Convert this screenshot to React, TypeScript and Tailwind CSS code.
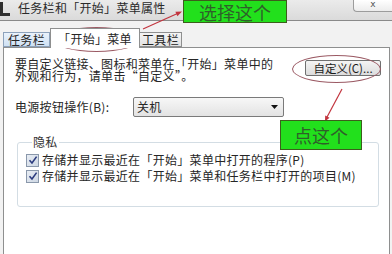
import React from 'react';

const CheckBox = () => (
  <span className="w-[13px] h-[13px] shrink-0 border border-[#8a98ab] bg-gradient-to-br from-[#e8edf4] to-[#cfd8e4] flex items-center justify-center">
    <svg width="10" height="10" viewBox="0 0 10 10">
      <path d="M1.5 5.2 L4 8 L8.6 1.6" fill="none" stroke="#2b3b7e" strokeWidth="1.6" />
    </svg>
  </span>
);

export default function App() {
  return (
    <div className="relative w-[392px] h-[254px] overflow-hidden bg-[#f2f2f2] text-[#262626] text-[12px] tracking-[0.3px] font-['Noto_Sans_CJK_SC','Liberation_Sans',sans-serif]">
      {/* title bar */}
      <div className="h-[21px] flex items-start bg-gradient-to-b from-[#ebebeb] to-[#dadada] border-b border-[#8a8a8a]">
        <svg width="10" height="16" viewBox="0 0 10 16" className="mt-[1px] shrink-0">
          <path d="M0 1 H3 V12 H10 V15 H0 Z" fill="#2e2e2e" />
        </svg>
        <span className="ml-[8px] mt-[1px] text-[12px] leading-[14px] text-[#2a2a2a]">任务栏和「开始」菜单属性</span>
        <div className="ml-auto w-[39px] h-[12px] bg-gradient-to-b from-white to-[#ececec] border border-t-0 border-r-0 border-[#9c9c9c] rounded-bl-[4px] flex justify-center">
          <span className="text-[9px] leading-[8px] text-[#555] font-['DejaVu_Sans',sans-serif]">x</span>
        </div>
      </div>

      {/* tabs */}
      <div className="h-[26px] flex items-end pl-[3px]">
        <div className="h-[15px] w-[47px] flex items-center justify-center border border-[#8da2bb] bg-gradient-to-b from-[#eaf2fb] to-[#cfe1f3] leading-[13px]">
          任务栏
        </div>
        <div className="relative z-10 -mb-px h-[20px] w-[90px] flex items-center justify-center border border-b-0 border-[#8e8f8f] bg-white leading-[13px]">
          「开始」菜单
        </div>
        <div className="h-[15px] w-[42px] flex items-center justify-center border border-l-0 border-[#8e8f8f] bg-gradient-to-b from-[#f4f4f4] to-[#e2e2e2] leading-[13px]">
          工具栏
        </div>
      </div>

      {/* panel */}
      <div className="ml-[3px] w-[387px] h-[210px] bg-white border border-[#8e8f8f] px-[11px] pt-[10px]">
        <div className="flex items-start justify-between">
          <p className="leading-[12px]">
            要自定义链接、图标和菜单在「开始」菜单中的
            <br />
            外观和行为，请单击“自定义”。
          </p>
          <button className="mt-[2px] mr-[-3px] w-[76px] h-[16px] border border-[#707070] rounded-[2px] bg-gradient-to-b from-[#f4f4f4] to-[#dcdcdc] text-[11.5px] leading-[14px] tracking-[0px] text-[#1c1c1c]">
            自定义(C)...
          </button>
        </div>

        <div className="mt-[15px] flex items-center">
          <span className="w-[118px] leading-[14px]">电源按钮操作(B):</span>
          <div className="w-[151px] h-[20px] border border-[#7a7a7a] rounded-[2px] bg-gradient-to-b from-[#f7f7f7] to-[#e3e3e3] flex items-center pl-[3px] pr-[5px]">
            <span className="leading-[14px]">关机</span>
            <svg width="7" height="4" viewBox="0 0 7 4" className="ml-auto">
              <path d="M0 0 H7 L3.5 4 Z" fill="#111" />
            </svg>
          </div>
        </div>

        <fieldset className="mt-[19px] ml-[2px] w-[362px] border border-[#d3dde4] rounded-[3px] pl-[8px] pb-[22px]">
          <legend className="ml-[6px] px-[1px] leading-[12px] text-[#333]">隐私</legend>
          <div className="mt-[4px] h-[16px] flex items-center gap-[3px]">
            <CheckBox />
            <span className="leading-[16px]">存储并显示最近在「开始」菜单中打开的程序(P)</span>
          </div>
          <div className="h-[16px] flex items-center gap-[3px]">
            <CheckBox />
            <span className="leading-[16px]">存储并显示最近在「开始」菜单和任务栏中打开的项目(M)</span>
          </div>
        </fieldset>
      </div>

      {/* annotations */}
      <div className="absolute left-[53px] top-[27px] w-[87px] h-[25px] rounded-[50%] border-[1.5px] border-[#9b5a64]" />
      <div className="absolute left-[292px] top-[55px] w-[89px] h-[28px] rounded-[50%] border-[1.5px] border-[#9b5a64]" />

      <svg className="absolute left-0 top-0 pointer-events-none" width="392" height="254" viewBox="0 0 392 254">
        <line x1="143" y1="29" x2="178" y2="13.3" stroke="#c2343e" strokeWidth="1.2" />
        <polygon points="182,11.5 177.4,16.3 175.4,11.7" fill="#c2343e" />
        <line x1="342" y1="89" x2="326.5" y2="118" stroke="#c2343e" strokeWidth="1.2" />
        <polygon points="325,121.5 329.5,117.8 325.2,115.4" fill="#c2343e" />
      </svg>

      <div className="absolute left-[183px] top-0 w-[104px] h-[23px] bg-[#22e01c] border border-[#3c5e1c] flex items-center justify-center text-[18px] leading-[20px] tracking-[0px] text-[#2f5f2a]">
        选择这个
      </div>
      <div className="absolute left-[280px] top-[120px] w-[82px] h-[30px] bg-[#22e01c] border border-[#3c5e1c] flex items-center justify-center text-[18px] leading-[20px] tracking-[0px] text-[#2f5f2a]">
        点这个
      </div>
    </div>
  );
}
